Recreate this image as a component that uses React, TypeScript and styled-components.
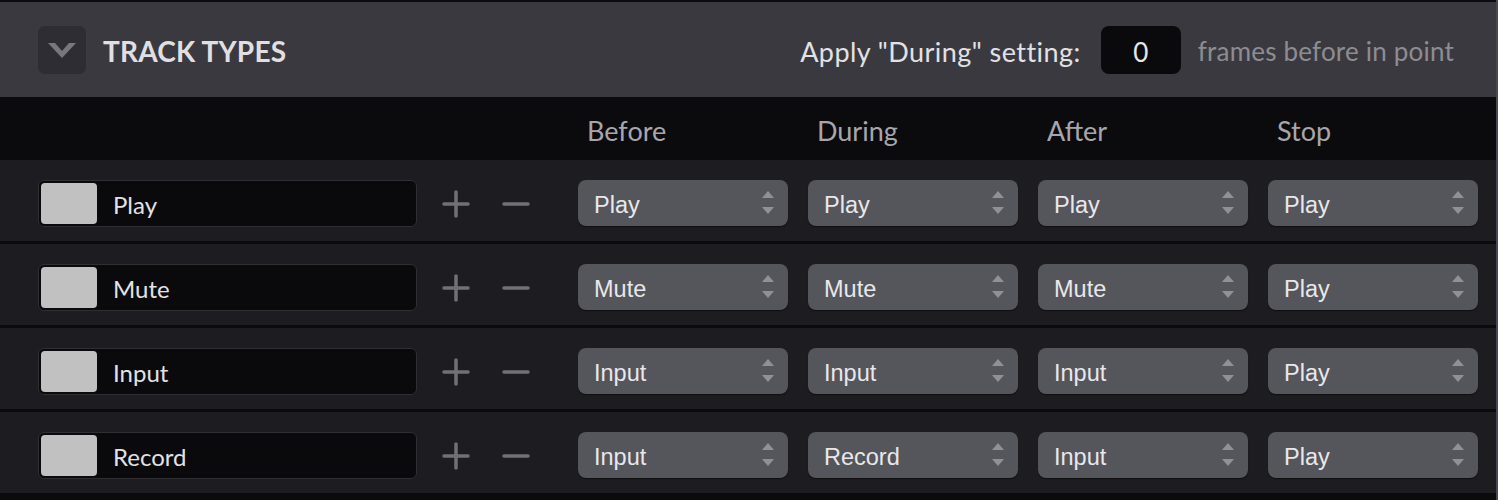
import React from "react";
import styled, { createGlobalStyle } from "styled-components";

const UI_FONT = `"Lato", "Open Sans", sans-serif`;
const SELECT_FONT = `"Liberation Sans", Arial, sans-serif`;

const GlobalStyle = createGlobalStyle`
  html, body {
    margin: 0;
    padding: 0;
    background: #0b0b0e;
  }
  * {
    box-sizing: border-box;
  }
`;

type Track = {
  name: string;
  before: string;
  during: string;
  after: string;
  stop: string;
};

const TRACKS: Track[] = [
  { name: "Play", before: "Play", during: "Play", after: "Play", stop: "Play" },
  { name: "Mute", before: "Mute", during: "Mute", after: "Mute", stop: "Play" },
  { name: "Input", before: "Input", during: "Input", after: "Input", stop: "Play" },
  { name: "Record", before: "Input", during: "Record", after: "Input", stop: "Play" },
];

const COLUMNS = ["Before", "During", "After", "Stop"];

const Panel = styled.div`
  width: 1498px;
  height: 500px;
  overflow: hidden;
  padding-top: 2px;
  background: #0b0b0e;
  border-right: 2px solid #4a4950;
  font-family: ${UI_FONT};
`;

const Header = styled.div`
  display: flex;
  align-items: center;
  height: 95px;
  padding: 3px 42px 0 38px;
  background: #3a3940;
`;

const Collapse = styled.button`
  display: flex;
  align-items: center;
  justify-content: center;
  width: 48px;
  height: 48px;
  margin-top: -2px;
  padding: 0;
  border: none;
  border-radius: 7px;
  background: #2e2d33;
  cursor: pointer;
`;

const Title = styled.h2`
  margin: 0 0 0 17px;
  flex: 1;
  font-size: 28px;
  font-weight: 700;
  letter-spacing: 0.2px;
  color: #e0e0e2;
`;

const ApplyLabel = styled.span`
  font-size: 27px;
  letter-spacing: 0.45px;
  color: #e2e2e4;
`;

const FramesInput = styled.div`
  display: flex;
  align-items: center;
  justify-content: center;
  width: 80px;
  height: 48px;
  margin: -2px 17px 0 20px;
  padding-top: 3px;
  border-radius: 8px;
  background: #0a0a0c;
  font-size: 26px;
  color: #e6e6e8;
`;

const FramesHint = styled.span`
  font-size: 26px;
  letter-spacing: 0.2px;
  color: #8d8d91;
`;

const ColumnBar = styled.div`
  display: flex;
  align-items: center;
  height: 63px;
  padding: 4px 0 0 587px;
  background: #0b0b0e;
`;

const ColumnLabel = styled.div`
  flex: 0 0 230px;
  font-size: 27px;
  color: #a7a7ab;
`;

const Row = styled.div`
  display: flex;
  align-items: flex-start;
  height: 84px;
  padding: 20px 18px 0 38px;
  border-bottom: 3px solid #0b0b0e;
  background: #1d1d21;
`;

const NameField = styled.div`
  display: flex;
  align-items: center;
  width: 379px;
  height: 47px;
  padding: 2px;
  border: 1px solid #2e2e33;
  border-radius: 6px;
  background: #0a0a0c;
`;

const Swatch = styled.div<{ $color: string }>`
  width: 56px;
  height: 41px;
  border-radius: 4px;
  background: ${(p) => p.$color};
`;

const NameText = styled.span`
  margin: 2px 0 0 16px;
  font-size: 24px;
  color: #e2e2e4;
`;

const IconButtons = styled.div`
  display: flex;
  align-items: center;
  gap: 32px;
  width: 161px;
  height: 47px;
  padding-left: 25px;
`;

const IconButton = styled.button`
  display: flex;
  padding: 0;
  border: none;
  background: none;
  cursor: pointer;
`;

const Selects = styled.div`
  display: flex;
  gap: 20px;
`;

const SelectBox = styled.div`
  display: flex;
  align-items: center;
  justify-content: space-between;
  width: 210px;
  height: 46px;
  padding: 0 14px 0 16px;
  border-radius: 8px;
  background: #55555c;
  box-shadow: 0 1px 1px rgba(0, 0, 0, 0.5);
  font-family: ${SELECT_FONT};
  font-size: 23.5px;
  color: #e8e8ea;
`;

const SelectValue = styled.span`
  padding-top: 4px;
`;

const Chevron = () => (
  <svg width="28" height="15" viewBox="0 0 28 15">
    <path d="M0 0 L7 0 L14 8 L21 0 L28 0 L14 15 Z" fill="#78787c" />
  </svg>
);

const Plus = () => (
  <svg width="28" height="28" viewBox="0 0 28 28">
    <path d="M14 2 V26 M2 14 H26" stroke="#707075" strokeWidth="3.5" strokeLinecap="round" />
  </svg>
);

const Minus = () => (
  <svg width="28" height="28" viewBox="0 0 28 28">
    <path d="M2 14 H26" stroke="#707075" strokeWidth="3.5" strokeLinecap="round" />
  </svg>
);

const Stepper = () => (
  <svg width="12" height="24" viewBox="0 0 12 24">
    <path d="M6 0 L12 7 L0 7 Z" fill="#909095" />
    <path d="M0 16 L12 16 L6 23 Z" fill="#909095" />
  </svg>
);

const Select = ({ value }: { value: string }) => (
  <SelectBox>
    <SelectValue>{value}</SelectValue>
    <Stepper />
  </SelectBox>
);

const TrackRow = ({ track }: { track: Track }) => (
  <Row>
    <NameField>
      <Swatch $color="#c1c1c1" />
      <NameText>{track.name}</NameText>
    </NameField>
    <IconButtons>
      <IconButton aria-label="Add">
        <Plus />
      </IconButton>
      <IconButton aria-label="Remove">
        <Minus />
      </IconButton>
    </IconButtons>
    <Selects>
      <Select value={track.before} />
      <Select value={track.during} />
      <Select value={track.after} />
      <Select value={track.stop} />
    </Selects>
  </Row>
);

export default function App() {
  return (
    <>
      <GlobalStyle />
      <Panel>
        <Header>
          <Collapse aria-label="Collapse">
            <Chevron />
          </Collapse>
          <Title>TRACK TYPES</Title>
          <ApplyLabel>Apply "During" setting:</ApplyLabel>
          <FramesInput>0</FramesInput>
          <FramesHint>frames before in point</FramesHint>
        </Header>
        <ColumnBar>
          {COLUMNS.map((c) => (
            <ColumnLabel key={c}>{c}</ColumnLabel>
          ))}
        </ColumnBar>
        {TRACKS.map((t) => (
          <TrackRow key={t.name} track={t} />
        ))}
      </Panel>
    </>
  );
}
